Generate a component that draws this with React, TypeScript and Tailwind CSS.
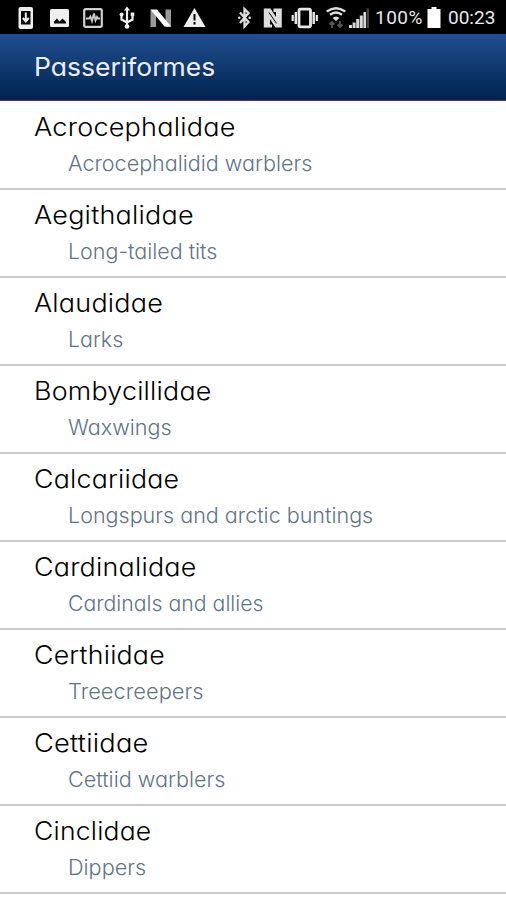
import type { ReactNode } from "react";

const families = [
  { name: "Acrocephalidae", common: "Acrocephalidid warblers", nameCls: "scale-x-[1.082]", commonCls: "scale-x-[1.026]" },
  { name: "Aegithalidae", common: "Long-tailed tits", nameCls: "scale-x-[1.08]", commonCls: "scale-x-[1.022]" },
  { name: "Alaudidae", common: "Larks", nameCls: "scale-x-[1.078]", commonCls: "scale-x-[1.018]" },
  { name: "Bombycillidae", common: "Waxwings", nameCls: "scale-x-[1.074]", commonCls: "scale-x-[1.028]" },
  { name: "Calcariidae", common: "Longspurs and arctic buntings", nameCls: "scale-x-[1.07]", commonCls: "scale-x-[1.025]" },
  { name: "Cardinalidae", common: "Cardinals and allies", nameCls: "scale-x-[1.075]", commonCls: "scale-x-[1.012]" },
  { name: "Certhiidae", common: "Treecreepers", nameCls: "scale-x-[1.068]", commonCls: "scale-x-[1.042]" },
  { name: "Cettiidae", common: "Cettiid warblers", nameCls: "scale-x-[1.09]", commonCls: "scale-x-[1.028]" },
  { name: "Cinclidae", common: "Dippers", nameCls: "scale-x-[1.06]", commonCls: "scale-x-[1.03]" },
];

function Icon({ w, className, children }: { w: number; className?: string; children: ReactNode }) {
  return (
    <svg width={w} height={34} viewBox={`0 0 ${w} 34`} fill="none" className={`shrink-0 ${className ?? ""}`}>
      {children}
    </svg>
  );
}

function StatusBar() {
  return (
    <div className="flex h-[34px] items-center bg-black pl-[18px] text-[#e8e8e8]">
      {/* download */}
      <Icon w={16}>
        <rect x="0.5" y="7" width="14.5" height="22" rx="2" fill="#eee" />
        <path d="M3 11h9.500v13.500H3z" fill="#000" />
        <path d="M7.800 12.500v8.500M4.800 18 7.800 21.500l3-3.500" stroke="#eee" strokeWidth="2" />
      </Icon>
      {/* picture */}
      <Icon w={20} className="ml-[16px]">
        <rect x="0" y="9" width="19" height="18" rx="1.5" fill="#eee" />
        <path d="M4 23.500V21.500L7 18.500l2.500 3 3-3 3.500 3.500v1.500z" fill="#000" />
      </Icon>
      {/* activity */}
      <Icon w={20} className="ml-[13px]">
        <rect x="1.200" y="9.200" width="17.600" height="17.600" rx="1.500" stroke="#d0d0d0" strokeWidth="2.200" />
        <path d="M3 18.500h3l1.500-2 1.500 4.500 2-7.500 1.500 7 1.500-3.500 1 1.500H17" stroke="#ccc" strokeWidth="1.900" />
      </Icon>
      {/* usb */}
      <Icon w={16} className="ml-[16px]">
        <path d="M8 9v17M2.500 15v4.500L8 22.500l5.500-3V14" stroke="#eee" strokeWidth="2.200" />
        <path d="M8 6.500l3 4H5z" fill="#eee" />
        <circle cx="8" cy="26.500" r="2.300" fill="#eee" />
        <circle cx="2.600" cy="14.500" r="2" fill="#eee" />
        <path d="M11.700 12.500h3.600v3.600h-3.600z" fill="#eee" />
      </Icon>
      {/* nougat */}
      <Icon w={22} className="ml-[15px]">
        <path d="M.5 10H6v17H.5zM15.500 9.500H21V27h-5.500z" fill="#999" />
        <path d="M.5 9.500H7L21 26.500h-6.500z" fill="#fff" />
      </Icon>
      {/* warning */}
      <Icon w={23} className="ml-[11px]">
        <path d="M11.500 8 22.500 27H.5z" fill="#eee" />
        <path d="M11.500 14v6.500M11.500 22v2.500" stroke="#000" strokeWidth="2" />
      </Icon>
      {/* bluetooth */}
      <Icon w={16} className="ml-[31px]">
        <path d="M3 12.500l8.500 9.500-4 4.500V9l4 4L3 23" stroke="#ddd" strokeWidth="2.300" />
        <circle cx="2.300" cy="17.700" r="1.300" fill="#ddd" />
        <circle cx="12.700" cy="17.700" r="1.300" fill="#ddd" />
      </Icon>
      {/* nfc */}
      <Icon w={20} className="ml-[10px]">
        <path d="M.8 8.500H7.500L13 17v-5h-2.500V8.500h8.300v19H12.500L7 19v5.500h2v3H.8z" fill="#ddd" />
        <path d="M6 12.500l7.500 11" stroke="#000" strokeWidth="1" />
      </Icon>
      {/* vibrate */}
      <Icon w={28} className="ml-[8px]">
        <rect x="8" y="9.200" width="11.500" height="17.600" rx="1.500" stroke="#e8e8e8" strokeWidth="2.800" />
        <path d="M4.800 12v12M22.700 12v12" stroke="#e8e8e8" strokeWidth="2.400" />
        <path d="M1.700 15v6M25.800 15v6" stroke="#e8e8e8" strokeWidth="2.200" />
      </Icon>
      {/* wifi */}
      <Icon w={21} className="ml-[7px]">
        <path d="M.8 11.500q9.200-6.500 18.400 0M4 14.800q6-4.500 12 0" stroke="#ddd" strokeWidth="2.500" />
        <path d="M6.500 18q3.500-3 7 0L10 21z" fill="#ddd" />
        <path d="M6 28v-6M3.500 24.500l2.500-2.500 2.500 2.500M14 21v6M11.500 24.500l2.500 2.500 2.500-2.500" stroke="#555" strokeWidth="1.800" />
      </Icon>
      {/* signal */}
      <Icon w={21} className="ml-[2px]">
        <path d="M0 25h3V28H0zM3.600 22.500h3V28h-3zM7.200 19h3v9h-3zM10.800 15.500h3V28h-3zM14.400 12h2.600V28h-2.600z" fill="#d8d8d8" />
        <path d="M17.500 8.500H20V28h-2.500z" fill="#444" />
      </Icon>
      <span className="ml-[5px] w-[48px] pt-[2px] font-['Roboto',sans-serif] text-[19px] leading-[34px] tracking-[0.5px] whitespace-nowrap">100%</span>
      <Icon w={15} className="ml-[4px]">
        <path d="M4.500 7h5v2h4v19H.5V9h4z" fill="#fff" />
      </Icon>
      <span className="ml-[6px] pt-[2px] font-['Roboto',sans-serif] text-[19px] leading-[34px] whitespace-nowrap">00:23</span>
    </div>
  );
}

export default function App() {
  return (
    <div className="h-[900px] w-[506px] overflow-hidden bg-white font-['Inter',sans-serif] [font-feature-settings:'cv11'_1]">
      <StatusBar />
      <header className="flex h-[67px] items-center border-b border-[#4a3b6a] bg-linear-to-b from-[#1f5090] to-[#022350] pl-[34px]">
        <h1 className="origin-left scale-x-[1.06] text-[25px] leading-8 text-[#eeeeff]">Passeriformes</h1>
      </header>
      <ul className="pt-[1.4px]">
        {families.map((f) => (
          <li key={f.name} className="h-[87.92px] border-b-2 border-[#c8c8c8] pt-[9px] pl-[34px] whitespace-nowrap">
            <h2 className={`origin-left text-[25px] leading-8 font-light tracking-[0.2px] text-black ${f.nameCls}`}>{f.name}</h2>
            <div className="mt-[7px] pl-[34px]">
              <p className={`origin-left text-[21px] leading-7 font-light text-[#60748a] ${f.commonCls}`}>{f.common}</p>
            </div>
          </li>
        ))}
      </ul>
    </div>
  );
}
